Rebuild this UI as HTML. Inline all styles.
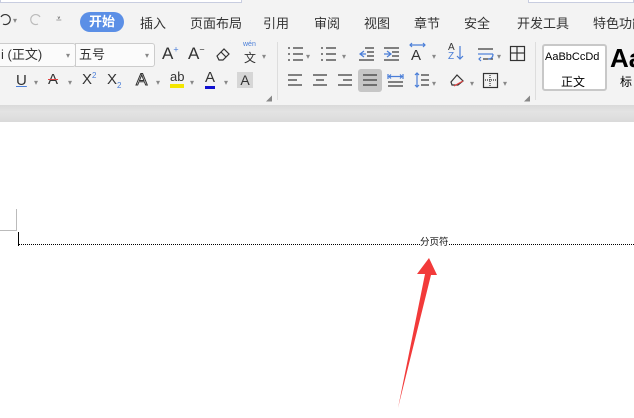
<!DOCTYPE html>
<html><head><meta charset="utf-8"><style>
*{margin:0;padding:0;box-sizing:border-box}
body{width:634px;height:418px;overflow:hidden;background:#fff;font-family:"Liberation Sans","Noto Sans CJK SC",sans-serif;position:relative;color:#333}
.a{position:absolute;white-space:nowrap}
.tb{position:absolute;left:0;top:0;width:634px;height:105px;background:#f3f3f3}
.band{position:absolute;left:0;top:105px;width:634px;height:17px;background:linear-gradient(#d9d9d9,#e3e3e3 40%,#dadada)}
.tab{font-size:13px;top:13px}
.dd{font-size:8px;color:#888}
svg.i{position:absolute;overflow:visible}
svg.i line,svg.i path,svg.i rect{stroke:#333;stroke-width:1.2;fill:none}
svg.i .b{stroke:#4a7ed8}
</style></head><body>
<div class="tb"></div>
<div class="a" style="left:0;top:0;width:242px;height:3px;border:1px solid #c8cde0;border-top:none;background:#fff"></div>
<div class="a" style="left:528px;top:0;width:106px;height:3px;border:1px solid #c8cde0;border-top:none;background:#fff"></div>
<svg class="i" style="left:0;top:14px" width="12" height="12"><path d="M1 3 A5 5 0 1 1 3 10"/></svg>
<div class="a dd" style="left:13px;top:16px">▾</div>
<svg class="i" style="left:29px;top:14px" width="12" height="12"><path d="M11 3 A5 5 0 1 0 9 10" style="stroke:#bbb"/></svg>
<div class="a" style="left:56px;top:14px;font-size:10px;color:#555">⩡</div>
<div class="a" style="left:80px;top:12px;width:44px;height:20px;border-radius:10px;background:#5b8fe6;color:#fff;font-size:13px;font-weight:bold;text-align:center;line-height:20px">开始</div>
<div class="a tab" style="left:140px">插入</div>
<div class="a tab" style="left:190px">页面布局</div>
<div class="a tab" style="left:263px">引用</div>
<div class="a tab" style="left:314px">审阅</div>
<div class="a tab" style="left:364px">视图</div>
<div class="a tab" style="left:414px">章节</div>
<div class="a tab" style="left:464px">安全</div>
<div class="a tab" style="left:517px">开发工具</div>
<div class="a tab" style="left:593px">特色功能</div>
<!-- font boxes -->
<div class="a" style="left:-4px;top:43px;width:80px;height:24px;border:1px solid #ccc;background:#fbfbfb;border-radius:3px;font-size:13px;line-height:22px;padding-left:4px">i (正文)</div>
<div class="a dd" style="left:66px;top:51px">▾</div>
<div class="a" style="left:75px;top:43px;width:80px;height:24px;border:1px solid #ccc;background:#fbfbfb;border-radius:0 3px 3px 0;font-size:13px;line-height:22px;padding-left:3px">五号</div>
<div class="a dd" style="left:145px;top:51px">▾</div>
<div class="a" style="left:162px;top:44px;font-size:17px">A<sup style="font-size:9px;color:#4a7ed8">+</sup></div>
<div class="a" style="left:188px;top:44px;font-size:17px">A<sup style="font-size:9px">−</sup></div>
<svg class="i" style="left:215px;top:47px" width="16" height="14"><path d="M2 9 L9 2 L14 7 L8 13 L4 13 Z"/><line x1="6" y1="5" x2="11" y2="10"/></svg>
<div class="a" style="left:243px;top:41px;font-size:7px;color:#4a7ed8">wén</div>
<div class="a" style="left:244px;top:49px;font-size:12px">文</div>
<div class="a dd" style="left:262px;top:52px">▾</div>
<!-- row2 -->
<div class="a" style="left:16px;top:72px;font-size:15px;text-decoration:underline;text-decoration-color:#4a7ed8">U</div>
<div class="a dd" style="left:34px;top:78px">▾</div>
<div class="a" style="left:48px;top:71px;font-size:15px;text-decoration:line-through;text-decoration-color:#e04040">A</div>
<div class="a dd" style="left:68px;top:78px">▾</div>
<div class="a" style="left:82px;top:71px;font-size:15px">X<sup style="font-size:8px;color:#4a7ed8">2</sup></div>
<div class="a" style="left:107px;top:71px;font-size:15px">X<sub style="font-size:8px;color:#4a7ed8">2</sub></div>
<div class="a" style="left:136px;top:70px;font-size:17px;color:#fff;-webkit-text-stroke:1px #333">A</div>
<div class="a dd" style="left:156px;top:78px">▾</div>
<div class="a" style="left:170px;top:70px;font-size:13px;border-bottom:4px solid #f3e600;line-height:14px">ab</div>
<div class="a dd" style="left:190px;top:78px">▾</div>
<div class="a" style="left:205px;top:70px;font-size:15px;border-bottom:3px solid #1010d0;line-height:16px">A</div>
<div class="a dd" style="left:224px;top:78px">▾</div>
<div class="a" style="left:237px;top:72px;width:16px;height:16px;background:#d6d6d6;font-size:14px;text-align:center;line-height:16px">A</div>
<div class="a" style="left:266px;top:94px;font-size:6px;color:#888">◢</div>
<div class="a" style="left:277px;top:42px;width:1px;height:58px;background:#ddd"></div>
<!-- paragraph row1 -->
<svg class="i" style="left:288px;top:47px" width="16" height="14"><line x1="0" y1="1" x2="2" y2="1"/><line x1="5" y1="1" x2="15" y2="1"/><line x1="0" y1="7" x2="2" y2="7"/><line x1="5" y1="7" x2="15" y2="7"/><line x1="0" y1="13" x2="2" y2="13"/><line x1="5" y1="13" x2="15" y2="13"/></svg>
<div class="a dd" style="left:306px;top:52px">▾</div>
<svg class="i" style="left:321px;top:47px" width="16" height="14"><line x1="0" y1="1" x2="2" y2="1"/><line x1="5" y1="1" x2="15" y2="1"/><line x1="0" y1="7" x2="2" y2="7"/><line x1="5" y1="7" x2="15" y2="7"/><line x1="0" y1="13" x2="2" y2="13"/><line x1="5" y1="13" x2="15" y2="13"/></svg>
<div class="a dd" style="left:342px;top:52px">▾</div>
<svg class="i" style="left:359px;top:47px" width="16" height="14"><line x1="6" y1="1" x2="15" y2="1"/><line x1="8" y1="5" x2="15" y2="5"/><line x1="8" y1="9" x2="15" y2="9"/><line x1="0" y1="13" x2="15" y2="13"/><path class="b" d="M5 4 L1 7 L5 10 M1 7 H7"/></svg>
<svg class="i" style="left:384px;top:47px" width="16" height="14"><line x1="0" y1="1" x2="15" y2="1"/><line x1="8" y1="5" x2="15" y2="5"/><line x1="8" y1="9" x2="15" y2="9"/><line x1="0" y1="13" x2="15" y2="13"/><path class="b" d="M3 4 L7 7 L3 10 M0 7 H7"/></svg>
<div class="a" style="left:411px;top:47px;font-size:15px">A</div>
<svg class="i" style="left:410px;top:43px" width="16" height="4"><path class="b" d="M0 2 H15 M2 0 L0 2 L2 4 M13 0 L15 2 L13 4"/></svg>
<div class="a dd" style="left:432px;top:52px">▾</div>
<div class="a" style="left:448px;top:43px;font-size:10px;color:#333;line-height:9px">A<br><span style="color:#4a7ed8">Z</span></div>
<svg class="i" style="left:457px;top:46px" width="6" height="14"><path class="b" d="M3 0 V13 M0 10 L3 13 L6 10"/></svg>
<svg class="i" style="left:478px;top:47px" width="16" height="14"><line x1="0" y1="2" x2="15" y2="2"/><line x1="0" y1="7" x2="15" y2="7" class="b"/><line x1="5" y1="12" x2="15" y2="12"/><path class="b" d="M15 7 Q15 12 10 12 M3 10 L1 12 L3 14"/></svg>
<div class="a dd" style="left:497px;top:52px">▾</div>
<svg class="i" style="left:510px;top:46px" width="15" height="15"><rect x="0.5" y="0.5" width="14" height="14"/><line x1="7" y1="0" x2="7" y2="15"/><line x1="0" y1="7" x2="15" y2="7"/></svg>
<!-- row2 paragraph -->
<svg class="i" style="left:288px;top:74px" width="15" height="12"><line x1="0" y1="1" x2="14" y2="1"/><line x1="0" y1="6" x2="9" y2="6"/><line x1="0" y1="11" x2="14" y2="11"/></svg>
<svg class="i" style="left:313px;top:74px" width="15" height="12"><line x1="0" y1="1" x2="14" y2="1"/><line x1="3" y1="6" x2="11" y2="6"/><line x1="0" y1="11" x2="14" y2="11"/></svg>
<svg class="i" style="left:338px;top:74px" width="15" height="12"><line x1="0" y1="1" x2="14" y2="1"/><line x1="5" y1="6" x2="14" y2="6"/><line x1="0" y1="11" x2="14" y2="11"/></svg>
<div class="a" style="left:358px;top:69px;width:24px;height:23px;background:#c6c6c6;border-radius:3px"></div>
<svg class="i" style="left:363px;top:74px" width="15" height="12"><line x1="0" y1="1" x2="14" y2="1"/><line x1="0" y1="6" x2="14" y2="6"/><line x1="0" y1="11" x2="14" y2="11"/></svg>
<svg class="i" style="left:387px;top:73px" width="17" height="14"><path class="b" d="M1 1 V6 M16 1 V6 M2 3.5 H15 M4 1.5 L2 3.5 L4 5.5 M13 1.5 L15 3.5 L13 5.5"/><line x1="1" y1="9" x2="16" y2="9"/><line x1="1" y1="13" x2="16" y2="13"/></svg>
<svg class="i" style="left:414px;top:73px" width="16" height="14"><path class="b" d="M3 0 V14 M1 2 L3 0 L5 2 M1 12 L3 14 L5 12"/><line x1="7" y1="2" x2="15" y2="2"/><line x1="7" y1="7" x2="15" y2="7"/><line x1="7" y1="12" x2="15" y2="12"/></svg>
<div class="a dd" style="left:432px;top:79px">▾</div>
<svg class="i" style="left:449px;top:72px" width="18" height="16"><path d="M2 10 L8 3 L14 9 L9 13 H3 Z"/><line x1="5" y1="14" x2="14" y2="9" style="stroke:#e04040"/></svg>
<div class="a dd" style="left:470px;top:79px">▾</div>
<svg class="i" style="left:483px;top:73px" width="15" height="15"><rect x="0.5" y="0.5" width="14" height="14"/><line x1="7" y1="0" x2="7" y2="15" style="stroke-dasharray:1 1"/><line x1="0" y1="7" x2="15" y2="7" style="stroke-dasharray:1 1"/></svg>
<div class="a dd" style="left:503px;top:79px">▾</div>
<div class="a" style="left:524px;top:94px;font-size:6px;color:#888">◢</div>
<div class="a" style="left:535px;top:42px;width:1px;height:58px;background:#ddd"></div>
<div class="a" style="left:542px;top:44px;width:65px;height:47px;border:2px solid #c8c8c8;background:#fff;border-radius:3px"></div>
<div class="a" style="left:545px;top:51px;font-size:11px;color:#000">AaBbCcDd</div>
<div class="a" style="left:561px;top:73px;font-size:12px;color:#000">正文</div>
<div class="a" style="left:610px;top:43px;font-size:26px;font-weight:bold;color:#000">Aa</div>
<div class="a" style="left:620px;top:73px;font-size:12px;color:#000">标</div>
<div class="band"></div>
<!-- doc -->
<div class="a" style="left:16px;top:209px;width:1px;height:22px;background:#bbb"></div>
<div class="a" style="left:0;top:230px;width:17px;height:1px;background:#bbb"></div>
<div class="a" style="left:18px;top:232px;width:1px;height:14px;background:#000"></div>
<div class="a" style="left:19px;top:244px;width:615px;border-top:1px dotted #000"></div>
<div class="a" style="left:420px;top:234px;font-size:9.5px;background:#fff;color:#111">分页符</div>
<svg class="a" style="left:0;top:0" width="634" height="418"><polygon points="429,258 437,275 431,275 398,408 425,274 417,274" fill="#f23a3a"/></svg>
</body></html>
